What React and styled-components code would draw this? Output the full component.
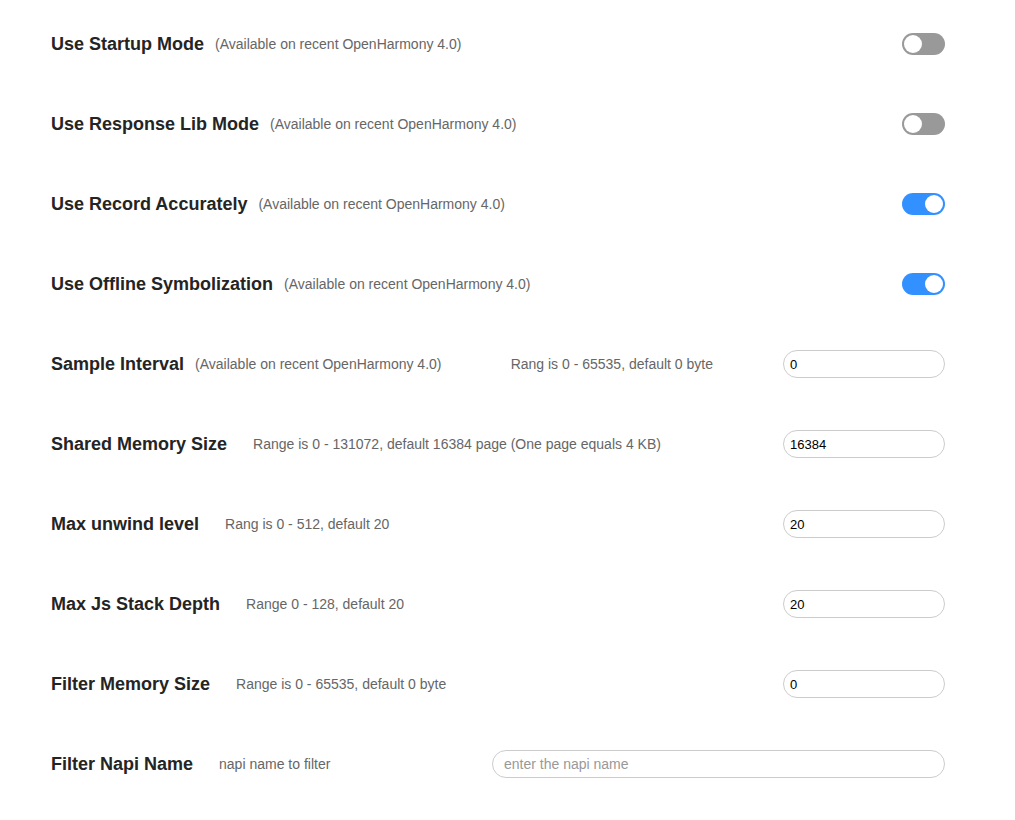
import React, { useState } from "react";
import styled, { createGlobalStyle, css } from "styled-components";

const GlobalStyle = createGlobalStyle`
  html, body {
    margin: 0;
    padding: 0;
    background: #ffffff;
    font-family: "Liberation Sans", Arial, sans-serif;
  }
`;

const rows = [
  { title: "Use Startup Mode", des: "(Available on recent OpenHarmony 4.0)", type: "switch", on: false },
  { title: "Use Response Lib Mode", des: "(Available on recent OpenHarmony 4.0)", type: "switch", on: false },
  { title: "Use Record Accurately", des: "(Available on recent OpenHarmony 4.0)", type: "switch", on: true },
  { title: "Use Offline Symbolization", des: "(Available on recent OpenHarmony 4.0)", type: "switch", on: true },
  {
    title: "Sample Interval",
    des: "(Available on recent OpenHarmony 4.0)",
    extra: "Rang is 0 - 65535, default 0 byte",
    type: "input",
    value: "0",
  },
  {
    title: "Shared Memory Size",
    des: "Range is 0 - 131072, default 16384 page (One page equals 4 KB)",
    wide: true,
    type: "input",
    value: "16384",
  },
  { title: "Max unwind level", des: "Rang is 0 - 512, default 20", wide: true, type: "input", value: "20" },
  { title: "Max Js Stack Depth", des: "Range 0 - 128, default 20", wide: true, type: "input", value: "20" },
  { title: "Filter Memory Size", des: "Range is 0 - 65535, default 0 byte", wide: true, type: "input", value: "0" },
  {
    title: "Filter Napi Name",
    des: "napi name to filter",
    wide: true,
    type: "input",
    long: true,
    placeholder: "enter the napi name",
  },
];

const Switch = ({ defaultOn }) => {
  const [on, setOn] = useState(defaultOn);
  return (
    <Track $on={on} onClick={() => setOn(!on)}>
      <Thumb $on={on} />
    </Track>
  );
};

const App = () => (
  <>
    <GlobalStyle />
    <Page>
      {rows.map((r) => (
        <Row key={r.title}>
          <Label>
            <Title>{r.title}</Title>
            <Des $wide={r.wide}>{r.des}</Des>
          </Label>
          <Control>
            {r.extra && <Extra>{r.extra}</Extra>}
            {r.type === "switch" ? (
              <Switch defaultOn={r.on} />
            ) : (
              <Input
                $long={r.long}
                defaultValue={r.value}
                placeholder={r.placeholder}
              />
            )}
          </Control>
        </Row>
      ))}
    </Page>
  </>
);

export default App;

const Page = styled.div`
  padding: 4px 70px 0 51px;
  display: flex;
  flex-direction: column;
`;

const Row = styled.div`
  height: 80px;
  display: flex;
  align-items: center;
  justify-content: space-between;
`;

const Label = styled.div`
  display: flex;
  align-items: center;
`;

const Title = styled.span`
  font-size: 18px;
  font-weight: bold;
  color: #242424;
`;

const Des = styled.span`
  font-size: 14px;
  color: #666666;
  margin-left: ${({ $wide }) => ($wide ? "26px" : "11px")};
`;

const Control = styled.div`
  display: flex;
  align-items: center;
  gap: 70px;
`;

const Extra = styled.span`
  font-size: 14px;
  color: #666666;
`;

const Track = styled.div`
  position: relative;
  width: 43px;
  height: 22px;
  border-radius: 11px;
  background: #999999;
  cursor: pointer;

  ${({ $on }) =>
    $on &&
    css`
      background: #3391ff;
    `}
`;

const Thumb = styled.div`
  position: absolute;
  top: 2px;
  left: 2px;
  width: 18px;
  height: 18px;
  border-radius: 50%;
  background: #ffffff;

  ${({ $on }) =>
    $on &&
    css`
      left: 23px;
    `}
`;

const Input = styled.input`
  box-sizing: border-box;
  width: ${({ $long }) => ($long ? "453px" : "162px")};
  height: 28px;
  border: 1px solid #cccccc;
  border-radius: 14px;
  padding: 0 10px 0 ${({ $long }) => ($long ? "11px" : "6px")};
  font-family: "Liberation Sans", Arial, sans-serif;
  font-size: ${({ $long }) => ($long ? "14px" : "13px")};
  color: #000000;
  outline: none;

  &::placeholder {
    color: #999999;
  }
`;
